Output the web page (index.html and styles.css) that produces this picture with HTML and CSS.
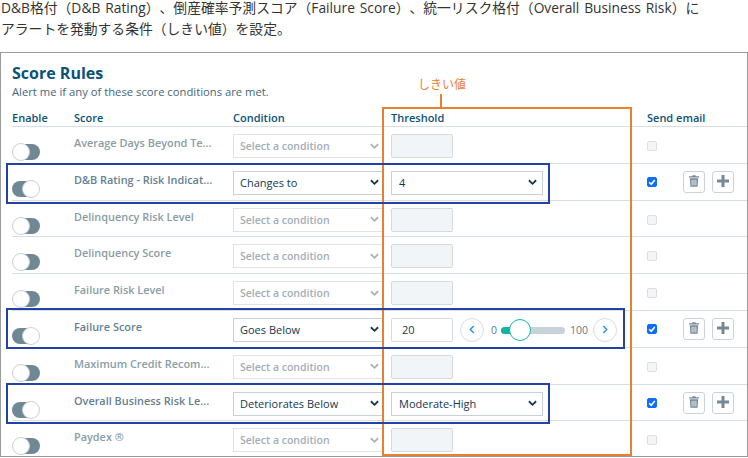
FILE: index.html
```html
<!DOCTYPE html>
<html lang="ja">
<head>
<meta charset="utf-8">
<title>Score Rules</title>
<link rel="stylesheet" href="styles.css">
</head>
<body>
<div class="page">
  <div class="intro">
    <p class="line">D&amp;B格付（D&amp;B Rating）、倒産確率予測スコア（Failure Score）、統一リスク格付（Overall Business Risk）に</p>
    <p class="line">アラートを発動する条件（しきい値）を設定。</p>
  </div>
  <section class="panel">
    <h1 class="title">Score Rules</h1>
    <p class="sub">Alert me if any of these score conditions are met.</p>
    <div class="row head">
      <div>Enable</div><div>Score</div><div>Condition</div><div>Threshold</div><div class="nowrap">Send email</div><div></div>
    </div>

    <div class="row">
      <div class="toggle"><i></i></div><div class="score">Average Days Beyond Te...</div>
      <div class="sel off"><span>Select a condition</span><svg viewBox="0 0 10 7"><path d="M1 1l4 4 4-4"/></svg></div>
      <div class="cell"><div class="inp off"></div></div><div class="check"></div><div></div>
    </div>

    <div class="row on">
      <div class="toggle"><i></i></div><div class="score">D&amp;B Rating - Risk Indicat...</div>
      <div class="sel"><span>Changes to</span><svg viewBox="0 0 10 7"><path d="M1 1l4 4 4-4"/></svg></div>
      <div class="cell"><div class="sel wide"><span>4</span><svg viewBox="0 0 10 7"><path d="M1 1l4 4 4-4"/></svg></div></div>
      <div class="check"><svg viewBox="0 0 10 10"><path d="M2.2 5.2l2 2 3.6-4.2"/></svg></div>
      <div class="acts">
        <div class="btn"><svg class="trash" viewBox="0 0 12 14"><path class="solid" d="M4.3 0h3.4l.6 1.4H12v1.4H0V1.400h3.700zM1 3.600h10l-.7 10.400H1.700zM3.200 5.500v6.800h1V5.500zm2.300 0v6.800h1V5.500zm2.300 0v6.800h1V5.500z"/></svg></div>
        <div class="btn"><svg class="plus" viewBox="0 0 12 12"><path class="solid" d="M4.500 0h3v4.500H12v3H7.500V12h-3V7.500H0v-3h4.500z"/></svg></div>
      </div>
    </div>

    <div class="row">
      <div class="toggle"><i></i></div><div class="score">Delinquency Risk Level</div>
      <div class="sel off"><span>Select a condition</span><svg viewBox="0 0 10 7"><path d="M1 1l4 4 4-4"/></svg></div>
      <div class="cell"><div class="inp off"></div></div><div class="check"></div><div></div>
    </div>

    <div class="row">
      <div class="toggle"><i></i></div><div class="score">Delinquency Score</div>
      <div class="sel off"><span>Select a condition</span><svg viewBox="0 0 10 7"><path d="M1 1l4 4 4-4"/></svg></div>
      <div class="cell"><div class="inp off"></div></div><div class="check"></div><div></div>
    </div>

    <div class="row">
      <div class="toggle"><i></i></div><div class="score">Failure Risk Level</div>
      <div class="sel off"><span>Select a condition</span><svg viewBox="0 0 10 7"><path d="M1 1l4 4 4-4"/></svg></div>
      <div class="cell"><div class="inp off"></div></div><div class="check"></div><div></div>
    </div>

    <div class="row on">
      <div class="toggle"><i></i></div><div class="score">Failure Score</div>
      <div class="sel"><span>Goes Below</span><svg viewBox="0 0 10 7"><path d="M1 1l4 4 4-4"/></svg></div>
      <div class="cell slider-cell">
        <div class="inp">20</div>
        <div class="round"><svg viewBox="0 0 7 10"><path d="M5.500 1l-4 4 4 4"/></svg></div>
        <span class="num">0</span>
        <div class="track"><div class="fill"></div><div class="knob"></div></div>
        <span class="num">100</span>
        <div class="round"><svg viewBox="0 0 7 10"><path d="M1.500 1l4 4-4 4"/></svg></div>
      </div>
      <div class="check"><svg viewBox="0 0 10 10"><path d="M2.2 5.2l2 2 3.6-4.200"/></svg></div>
      <div class="acts">
        <div class="btn"><svg class="trash" viewBox="0 0 12 14"><path class="solid" d="M4.300 0h3.400l.6 1.400H12v1.400H0V1.400h3.700zM1 3.600h10l-.7 10.400H1.700zM3.200 5.500v6.800h1V5.500zm2.300 0v6.800h1V5.500zm2.300 0v6.800h1V5.500z"/></svg></div>
        <div class="btn"><svg class="plus" viewBox="0 0 12 12"><path class="solid" d="M4.500 0h3v4.500H12v3H7.500V12h-3V7.500H0v-3h4.500z"/></svg></div>
      </div>
    </div>

    <div class="row">
      <div class="toggle"><i></i></div><div class="score">Maximum Credit Recom...</div>
      <div class="sel off"><span>Select a condition</span><svg viewBox="0 0 10 7"><path d="M1 1l4 4 4-4"/></svg></div>
      <div class="cell"><div class="inp off"></div></div><div class="check"></div><div></div>
    </div>

    <div class="row on">
      <div class="toggle"><i></i></div><div class="score">Overall Business Risk Le...</div>
      <div class="sel"><span>Deteriorates Below</span><svg viewBox="0 0 10 7"><path d="M1 1l4 4 4-4"/></svg></div>
      <div class="cell"><div class="sel wide"><span>Moderate-High</span><svg viewBox="0 0 10 7"><path d="M1 1l4 4 4-4"/></svg></div></div>
      <div class="check"><svg viewBox="0 0 10 10"><path d="M2.2 5.2l2 2 3.6-4.200"/></svg></div>
      <div class="acts">
        <div class="btn"><svg class="trash" viewBox="0 0 12 14"><path class="solid" d="M4.300 0h3.400l.6 1.400H12v1.400H0V1.400h3.700zM1 3.600h10l-.7 10.400H1.700zM3.200 5.500v6.800h1V5.500zm2.300 0v6.800h1V5.500zm2.300 0v6.800h1V5.500z"/></svg></div>
        <div class="btn"><svg class="plus" viewBox="0 0 12 12"><path class="solid" d="M4.500 0h3v4.500H12v3H7.500V12h-3V7.500H0v-3h4.500z"/></svg></div>
      </div>
    </div>

    <div class="row last">
      <div class="toggle"><i></i></div><div class="score">Paydex ®</div>
      <div class="sel off"><span>Select a condition</span><svg viewBox="0 0 10 7"><path d="M1 1l4 4 4-4"/></svg></div>
      <div class="cell"><div class="inp off"></div></div><div class="check"></div><div></div>
    </div>
  </section>

  <div class="note">しきい値</div>
  <div class="stem"></div>
  <div class="orange"></div>
  <div class="blue b1"></div>
  <div class="blue b2"></div>
  <div class="blue b3"></div>
</div>
</body>
</html>
```
FILE: styles.css
```css
* { box-sizing: border-box; }
html, body { margin: 0; padding: 0; background: #fff; }
body { width: 748px; height: 458px; overflow: hidden; font-family: "Open Sans", "Noto Sans CJK JP", sans-serif; }
.page { position: relative; width: 748px; height: 458px; overflow: hidden; }
.intro { height: 52px; padding-left: 1px; font-size: 13.800px; word-spacing: 1.300px; color: #333; white-space: nowrap; text-spacing-trim: space-all; }
.line { margin: 0; line-height: 15px; }
.line + .line { margin-top: 6px; }
.panel { border: 1px solid #9a9a9a; height: 405px; padding: 9px 0 0 11px; overflow: hidden; }
.title { margin: 0; font-size: 16px; line-height: 22px; font-weight: 700; color: #0b5277; }
.sub { margin: 0; font-size: 11.250px; line-height: 15px; color: #47667a; }
.row { display: grid; grid-template-columns: 62px 159px 158px 256px 36px 1fr; height: 36.8px; border-bottom: 1px solid #d8dfe4; align-items: start; }
.row.last { border-bottom: 0; }
.head { height: 25px; margin-top: 3px; font-size: 11px; line-height: 15px; font-weight: 600; color: #0b5277; padding-top: 8px; }
.nowrap { white-space: nowrap; }
.toggle { position: relative; width: 28px; height: 18px; margin-top: 16px; }
.toggle::before { content: ""; position: absolute; left: 2px; right: 0; top: 1px; height: 16px; border-radius: 8px; background: #6f8894; }
.toggle i { position: absolute; left: 0; top: 0; width: 18px; height: 18px; border-radius: 50%; background: #fff; border: 1px solid #c9d1d6; }
.on .toggle::before { left: 0; right: 2px; }
.on .toggle i { left: 10px; }
.score { font-size: 10.900px; line-height: 15px; font-weight: 600; color: #8a9ca6; margin-top: 8px; white-space: nowrap; }
.on .score { color: #668090; }
.sel { width: 150px; height: 24px; margin-top: 7px; border: 1px solid #c9d0d6; display: flex; align-items: center; justify-content: space-between; padding: 0 0 0 6px; font-size: 11px; color: #14384e; background: #fff; }
.sel svg { width: 9px; height: 7px; margin-right: 3px; flex: none; }
.sel path { fill: none; stroke: #14384e; stroke-width: 2; }
.sel.off { color: #a2aeb6; background: #fff; border-color: #dfe4e8; }
.sel.off span { font-weight: 600; font-size: 10.500px; }
.sel.off path { stroke: #a9b3ba; }
.sel.wide { width: 152px; padding-left: 7px; }
.sel.wide svg { margin-right: 5px; }
.inp { width: 62px; height: 24px; margin-top: 7px; border: 1px solid #d4dade; border-radius: 2px; background: #fff; font-size: 11px; line-height: 22px; padding-left: 10px; color: #14384e; flex: none; }
.inp.off { background: #f2f5f8; }
.slider-cell { display: flex; align-items: flex-start; }
.round { width: 24px; height: 24px; margin: 7px 0 0 7px; border: 1px solid #d7dde1; border-radius: 50%; display: flex; align-items: center; justify-content: center; flex: none; }
.round svg { width: 6px; height: 9px; }
.round path { fill: none; stroke: #2b97d6; stroke-width: 1.700; }
.num { font-size: 10.500px; line-height: 24px; margin-top: 7px; color: #5f7b8a; }
.slider-cell .round + .num { margin-left: 7px; }
.track { position: relative; width: 64px; height: 7px; margin: 16px 5px 0 4px; border-radius: 4px; background: #c7d2d9; flex: none; }
.fill { width: 16px; height: 7px; border-radius: 4px 0 0 4px; background: #16b3a3; }
.knob { position: absolute; left: 8px; top: -8px; width: 22px; height: 22px; border-radius: 50%; background: #fff; border: 1px solid #16b3a3; }
.slider-cell .round:last-child { margin-left: 5px; }
.check { width: 10px; height: 10px; margin-top: 14px; border: 1px solid #dadfe3; border-radius: 2px; background: #f4f5f6; }
.check svg { display: none; }
.on .check { background: #0d6efd; border-color: #0d6efd; margin-top: 13px; position: relative; }
.on .check svg { display: block; position: absolute; left: -1px; top: -1px; width: 10px; height: 10px; }
.check path { fill: none; stroke: #fff; stroke-width: 1.600; }
.acts { display: flex; gap: 7px; margin-top: 7px; }
.btn { width: 22px; height: 22px; border: 1px solid #ccd3d8; border-radius: 3px; display: flex; align-items: center; justify-content: center; padding-bottom: 2px; background: #fff; flex: none; }
.trash { width: 10px; height: 12px; }
.plus { width: 12px; height: 12px; }
.solid { fill: #758a96; fill-rule: evenodd; }
.note { position: absolute; left: 418px; top: 75px; font-size: 12px; line-height: 17px; color: #e8812f; font-family: "Noto Sans CJK JP", sans-serif; }
.stem { position: absolute; left: 440px; top: 94px; width: 2px; height: 14px; background: #e8812f; }
.orange { position: absolute; left: 382px; top: 107px; width: 250px; height: 349px; border: 2px solid #e8812f; }
.blue { position: absolute; left: 6px; border: 2px solid #2441a5; }
.b1 { top: 163px; width: 544px; height: 41px; }
.b2 { top: 308px; width: 619px; height: 41px; }
.b3 { top: 383px; width: 544px; height: 41px; }
```
